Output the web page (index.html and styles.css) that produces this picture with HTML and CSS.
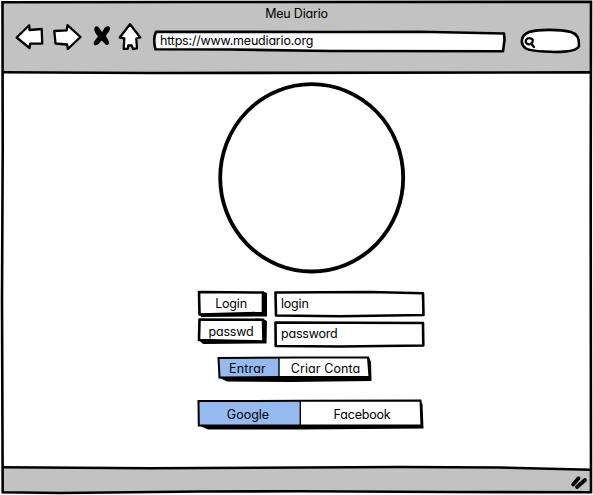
FILE: index.html
```
<!DOCTYPE html>
<html lang="pt">
<head>
<meta charset="utf-8">
<title>Meu Diario</title>
<link rel="stylesheet" href="styles.css">
</head>
<body>
<div class="window">
  <svg class="art" viewBox="0 0 593 495">
    <path class="chrome" d="M3 3H590V72.5H3Z"/>
    <path class="chrome" d="M3 467.5L150 468L400 467L500 467.5L591 469.7V492L400 491.2L200 491.3L60 492.7L3 492Z"/>
    <path class="line" d="M2.5 2.2L200 2L591 1.8L590.7 200L591 492.3L450 492L300 491.3L200 491.5L60 493L2.7 492.3L2 300L2.7 150Z"/>
    <path class="line" d="M2.5 72.2L150 73L591 72.4M2.500 467.300L150 468.300L400 467L500 467.500L591 469.800"/>
  </svg>
  <header class="header">
    <h1 class="title">Meu Diario</h1>
    <div class="toolbar">
      <svg class="nav" width="130" height="32" viewBox="14 21 130 32">
        <path class="icon" d="M16.700 37.500L29.200 25.300L29.500 30L41.700 29L42.200 43.500L30.200 43.700L29.500 48Z"/>
        <path class="icon" d="M54.300 31L66.700 30.300L67.500 25.200L80.500 37L67.800 49L67 44.500L55.500 43.500Z"/>
        <path d="M94.300 28.500C94.800 25.500 97.500 25.500 99.200 28L102 32L104.500 28C106 25.500 109.500 25.500 110 28C110.200 30.500 107.500 33.500 105.800 36C107.300 38.500 109.700 41.500 108.700 44C107.500 46 105.500 45 104.500 43.300L101.500 40.500L98.800 43.800C97 45.500 94 45.800 93.600 44C93.200 41.500 96 39 98 36.500C96 34 93.800 31 94.300 28.500Z"/>
        <path class="icon" d="M130 24.200L119.700 37.500L124.300 38.300L123.700 48.800L127.700 48.900L128.300 45.500L131.700 45.500L133 49L137 48.300L136.300 38.500L140.300 37.500Z"/>
      </svg>
      <div class="address">
        <svg class="art" viewBox="152 29 355 24"><path class="box" d="M156 31.700L330 32L420 31.800L504 33.500L504.500 40L503 51.300L330 51L230 49.500L155.500 49.300C153.500 42 154 36 156 31.700Z"/></svg>
        <span class="text url">https://www.meudiario.org</span>
      </div>
      <div class="search">
        <svg class="art" viewBox="519 27 64 28">
          <path class="box" d="M529 32C539 29 560 29.300 571 32C578 34 579.500 39 579 46C577 51 566 52 555 52C542 51 532 52 526 48.500C520 44 520 36 529 32Z"/>
          <path class="lens" d="M530 38.300C526 37.500 524.500 42 527 43.800C530 45.500 533 43 532.800 40C532.500 38.500 531.500 38.300 530 38.300ZM531.500 44L534 47"/>
        </svg>
      </div>
    </div>
  </header>
  <main class="content">
    <svg class="avatar" width="190" height="194" viewBox="0 0 190 194"><ellipse cx="95.700" cy="96.800" rx="91.500" ry="93.700"/></svg>
    <div class="form">
      <div class="row">
        <div class="label">
          <svg class="art" viewBox="196 289 72 29"><path d="M199 312L201 317L267 316.500L267 293L263 291.500V313Z"/><path class="box" d="M199 292L263 292.500L263 313L199.500 314.500Z"/></svg>
          <span class="text login">Login</span>
        </div>
        <div class="field">
          <svg class="art" viewBox="273 289 153 29"><path class="box" d="M275.500 292.500L370 292L423 293.200L423.500 315L340 316.300L276 315.500Z"/></svg>
          <span class="text user">login</span>
        </div>
      </div>
      <div class="row">
        <div class="label passwd">
          <svg class="art" viewBox="196 318 72 29"><path d="M199 340L203 344L266.500 343.500L267 321L263 319V341Z"/><path class="box" d="M199.500 319.500L263 319.700L263.500 341.500L240 341L199 340Z"/></svg>
          <span class="text">passwd</span>
        </div>
        <div class="field second">
          <svg class="art" viewBox="273 319 153 29"><path class="box" d="M275.500 322.500L423 323L423.300 345.500L340 346.500L275.700 346Z"/></svg>
          <span class="text password">password</span>
        </div>
      </div>
    </div>
    <div class="bar actions">
      <svg class="art" viewBox="215 354 160 30">
        <path d="M218 377L227 381.500L290 382L371.500 381L371 362L369 357V377Z"/>
        <path class="fill" d="M218.500 358H279V377H220Z"/>
        <path class="white" d="M279 358H367.500L369 377H279Z"/>
        <path class="thin" d="M218.500 358L300 357.500L368 357.500L369.500 377L279 377L219.500 377.500Z"/>
        <path class="divider" d="M279 358V379"/>
      </svg>
      <span class="text entrar">Entrar</span><span class="text criar">Criar Conta</span>
    </div>
    <div class="bar social">
      <svg class="art" viewBox="195 396 232 34">
        <path d="M198 425L208 429.500L300 429.500L423.500 428.500L422.500 404L420 400V424Z"/>
        <path class="fill" d="M199 401H300V425.500H199Z"/>
        <path class="white" d="M300 401H420L421 425H300Z"/>
        <path class="thin" d="M198.500 401L300 400.800L420.500 400.500L421.500 425.500L198.800 425.500Z"/>
        <path class="divider" d="M300.300 401V427"/>
      </svg>
      <span class="text google">Google</span><span class="text facebook">Facebook</span>
    </div>
  </main>
  <footer class="footer">
    <svg width="20" height="18" viewBox="569 473 20 18"><path class="grip" d="M573.200 484.500L578.500 478.200M577 487L585 480"/></svg>
  </footer>
</div>
</body>
</html>
```
FILE: styles.css
```
* { box-sizing: border-box; }
body { margin: 0; background: #fff; font-family: Inter, sans-serif; font-feature-settings: "cv11"; font-size: 12.5px; letter-spacing: -0.2px; color: #000; overflow: hidden; }
svg { display: block; }
.window { position: relative; width: 593px; height: 495px; display: flex; flex-direction: column; }
.art { position: absolute; inset: 0; width: 100%; height: 100%; z-index: -1; }
.chrome { fill: #c2c2c2; }
.line { fill: none; stroke: #000; stroke-width: 2.6; }
.icon, .box { fill: #fff; stroke: #000; stroke-width: 2.6; stroke-linejoin: round; }
.icon { stroke-width: 2.3; }
.lens { fill: none; stroke: #000; stroke-width: 2.2; stroke-linecap: round; }
.grip { stroke: #000; stroke-width: 3.8; stroke-linecap: round; }
.thin { fill: none; stroke: #000; stroke-width: 2; }
.divider { fill: none; stroke: #000; stroke-width: 1.4; }
.fill { fill: #95baf0; }
.white { fill: #fff; }
.header { height: 73px; }
.title { margin: 0; padding: 5px 0 0 0; height: 21px; line-height: 18px; font-size: 12.5px; font-weight: 400; text-align: center; }
.toolbar { display: flex; padding-left: 14px; }
.address { position: relative; width: 355px; height: 24px; margin: 8px 0 0 8px; padding-left: 8px; line-height: 24px; }
.search { position: relative; width: 64px; height: 28px; margin: 6px 0 0 12px; }
.content { flex: 1; display: flex; flex-direction: column; align-items: center; padding-left: 29px; }
.avatar { margin-top: 8px; }
.avatar ellipse { fill: #fff; stroke: #000; stroke-width: 3.8; }
.form { width: 230px; margin-top: 14px; }
.row { display: flex; gap: 5px; height: 29px; }
.label, .field { position: relative; height: 29px; line-height: 29px; }
.label { width: 72px; padding-right: 2px; text-align: center; }
.passwd { line-height: 27px; }
.field { width: 153px; padding-left: 8px; }
.second { margin-top: 1px; }
.bar { position: relative; display: flex; text-align: center; }
.actions { width: 160px; height: 30px; line-height: 30px; margin: 7px 32px 0 0; }
.entrar { width: 65px; letter-spacing: 0.2px; }
.criar { width: 91px; letter-spacing: 0.1px; }
.social { width: 232px; height: 34px; line-height: 37px; margin-top: 12px; }
.google { width: 106px; letter-spacing: 0; }
.facebook { width: 122px; }
.footer { height: 27px; display: flex; justify-content: flex-end; padding: 5px 4px 0 0; }
```
